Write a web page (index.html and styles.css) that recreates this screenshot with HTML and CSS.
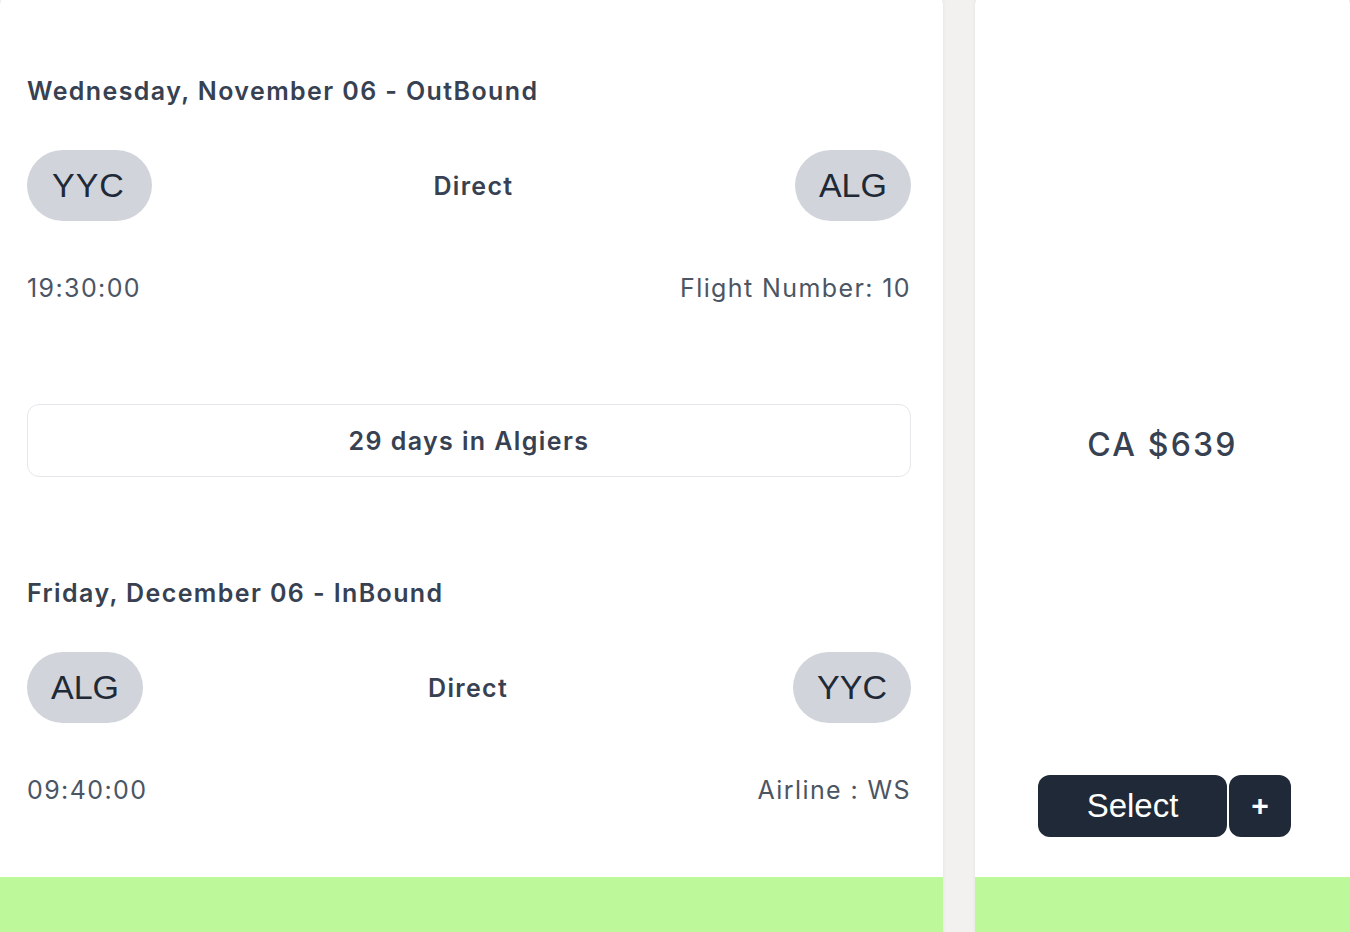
FILE: index.html
```html
<!DOCTYPE html>
<html>
<head>
<meta charset="utf-8">
<link rel="stylesheet" href="styles.css">
</head>
<body>
<div class="row">
  <section class="card trip">
    <div class="trip-body">
      <div class="leg">
        <h2 class="leg-title">Wednesday, November 06 - OutBound</h2>
        <div class="route">
          <span class="pill pill-wide">YYC</span>
          <span class="stops">Direct</span>
          <span class="pill">ALG</span>
        </div>
        <div class="meta">
          <span>19:30:00</span>
          <span>Flight Number: 10</span>
        </div>
      </div>
      <div class="stay">29 days in Algiers</div>
      <div class="leg">
        <h2 class="leg-title">Friday, December 06 - InBound</h2>
        <div class="route">
          <span class="pill">ALG</span>
          <span class="stops">Direct</span>
          <span class="pill">YYC</span>
        </div>
        <div class="meta">
          <span>09:40:00</span>
          <span>Airline : WS</span>
        </div>
      </div>
    </div>
    <div class="card-foot"></div>
  </section>
  <section class="card offer">
    <div class="offer-body">
      <div class="price">CA $639</div>
      <div class="actions">
        <button class="btn btn-select">Select</button>
        <button class="btn btn-plus">+</button>
      </div>
    </div>
    <div class="card-foot"></div>
  </section>
</div>
</body>
</html>
```
FILE: styles.css
```css
html, body {
  margin: 0;
  padding: 0;
}
body {
  background: #f2f1ef;
  font-family: Inter, "Noto Sans", sans-serif;
  overflow: hidden;
  height: 932px;
}
.row {
  display: flex;
  gap: 32px;
  margin-top: -8px;
}
.card {
  background: #ffffff;
  border-radius: 14px;
  overflow: hidden;
  display: flex;
  flex-direction: column;
  box-shadow: 0 0 4px rgba(0, 0, 0, 0.06);
}
.trip {
  width: 943px;
  flex: none;
}
.offer {
  flex: 1;
}
.trip-body {
  padding: 83px 32px 0 27px;
  height: 885px;
  box-sizing: border-box;
}
.leg-title {
  margin: 0;
  font-size: 25px;
  line-height: 32px;
  font-weight: 600;
  letter-spacing: 1.4px;
  color: #374151;
}
.route {
  margin-top: 43px;
  display: flex;
  align-items: center;
  justify-content: space-between;
}
.pill {
  height: 71px;
  padding: 0 24px;
  border-radius: 36px;
  background: #d1d5db;
  display: flex;
  align-items: center;
  font-family: "Liberation Sans", Arial, sans-serif;
  font-size: 34px;
  color: #1f2937;
}
.pill-wide {
  padding: 0 27px 0 25px;
  letter-spacing: 1px;
}
.stops {
  font-size: 25px;
  font-weight: 600;
  letter-spacing: 1.3px;
  color: #374151;
}
.meta {
  margin-top: 51px;
  display: flex;
  justify-content: space-between;
  font-size: 25px;
  line-height: 32px;
  letter-spacing: 1.4px;
  color: #4b5563;
}
.stay {
  margin: 100px 0;
  height: 73px;
  box-sizing: border-box;
  border: 1px solid #e5e7eb;
  border-radius: 12px;
  display: flex;
  align-items: center;
  justify-content: center;
  font-size: 25px;
  font-weight: 600;
  letter-spacing: 1.4px;
  color: #374151;
}
.card-foot {
  height: 70px;
  background: #bdf89a;
}
.offer-body {
  height: 885px;
  display: flex;
  flex-direction: column;
  align-items: center;
}
.price {
  margin-top: 433px;
  font-size: 32px;
  line-height: 40px;
  font-weight: 500;
  letter-spacing: 2.2px;
  color: #374151;
}
.actions {
  margin-top: 310px;
  margin-left: 4px;
  display: flex;
  gap: 2px;
}
.btn {
  border: none;
  height: 62px;
  border-radius: 12px;
  background: #1f2937;
  color: #ffffff;
  font-family: "Liberation Sans", Arial, sans-serif;
  display: flex;
  align-items: center;
  justify-content: center;
  padding: 0;
}
.btn-select {
  width: 189px;
  font-size: 33px;
}
.btn-plus {
  width: 62px;
  font-size: 30px;
  font-weight: 700;
}
```
